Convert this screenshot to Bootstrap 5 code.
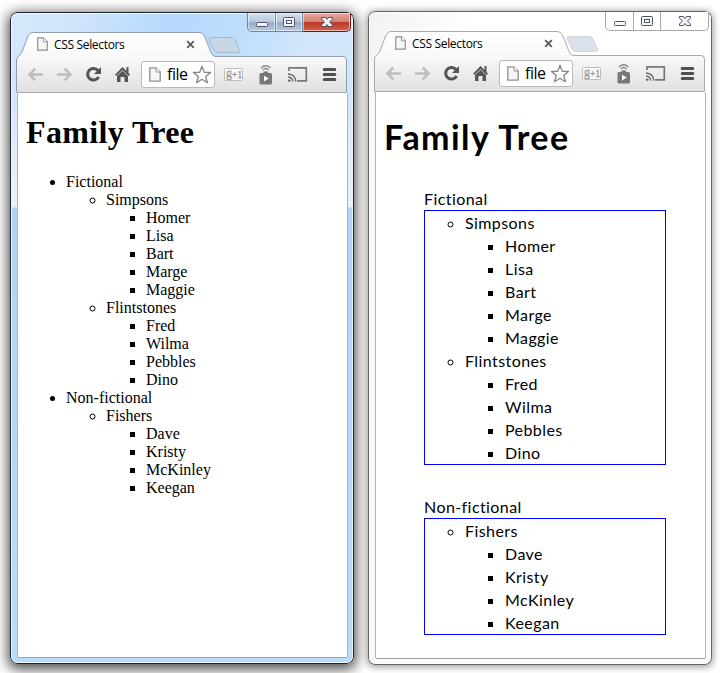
<!DOCTYPE html>
<html lang="en">
<head>
<meta charset="utf-8">
<meta name="viewport" content="width=device-width, initial-scale=1">
<title>CSS Selectors</title>
<link href="https://cdn.jsdelivr.net/npm/bootstrap@5.3.0/dist/css/bootstrap.min.css" rel="stylesheet">
<style>
body{width:720px;height:673px;overflow:hidden;background:#fff;color:#000}
.desk{padding:11px 0 0 10px;gap:14px;height:673px}
.win{width:344px;border-radius:7px;padding:0 7px 7px;flex:none}
.win-active{height:652px;margin-top:1px;
 background:linear-gradient(115deg,#d6e8fb 0,#cfe4fb 20%,#b5d9fd 45%,#bfdefc 65%,#d3e6fb 85%) 0 0/344px 60px no-repeat,linear-gradient(#d0e4fb 0,#cfe3fa 60px,#e8f2fd 195px,#b0d3f7 196px,#bbdbfb 100%);
 box-shadow:inset 0 0 0 1px #20252d,inset 0 0 0 2px #f0f8ff,0 3px 13px 2px rgba(0,0,0,.72)}
.win-idle{height:654px;background:linear-gradient(115deg,#f1f1f1 0,#f9f9f9 15%,#fff 30%) 0 0/344px 90px no-repeat,#fafafa;
 box-shadow:inset 0 0 0 1px #636363,inset 0 0 0 2px #fff,0 1px 7px 1px rgba(0,0,0,.4)}
.caption{height:20px;padding:1px 0 0 230px}
.caption>span{height:19px;flex:none;border:solid #75879c;border-width:0 1px 1px 0;box-shadow:inset 0 0 0 1px rgba(255,255,255,.55);background:linear-gradient(#d3e1f0 0,#b9c9dc 48%,#96acc6 50%,#b5cbe4 100%)}
.caption .c-min{width:29px;border-left-width:1px;border-bottom-left-radius:5px}
.caption .c-max{width:27px}
.caption .c-close{width:48px;border-color:#5c2326;border-bottom-right-radius:5px;background:linear-gradient(#e6a99f 0,#d48073 48%,#bb3627 50%,#d3604a 100%)}
.win-idle .caption>span{background:#fff;border-color:#a8a8a8}
.caption svg,.tools svg,.tabs svg,.omni svg{display:block;flex:none}
.chrome{display:grid;height:61px;margin:0 -7px;width:344px}
.chrome>*{grid-area:1/1}
.edge{fill:none;stroke:#8f9eb1}
.newtab{fill:#c8d7e6;stroke:#a9bacb}
.win-idle .edge{stroke:#aaa}
.win-idle .newtab{fill:#dbe1e9;stroke:#d2d7dd}
.tabs{height:24px;padding:0 0 0 27px;font:12px/24px "Segoe UI","Open Sans",sans-serif;letter-spacing:-.33px}
.tab-title{width:128px;height:23px;margin-left:6px}
.tools{padding:9px 0 0 16px;height:36px}
.omni{width:74px;height:27px;margin:-4px 9px 0 8px;border:1px solid #b9b9b9;border-radius:3px;background:#fff;padding:0 2px 0 7px;font:16px/26px "Segoe UI","Open Sans",sans-serif}
.omni b{font-weight:400;width:25px;height:27px;margin:0 2px 0 6px;letter-spacing:-.5px}
.gap9{gap:9px}.gap12{gap:12px}
.doc{background:#fff;box-shadow:-1px 0 #a9b7c8,1px 0 #b3b3b3,0 1px #a2a2a2;padding:0 8px;margin:0 0 0 1px;width:329px}
.doc ul{padding-left:40px;margin:0}
.doc ul ul{list-style:circle}.doc ul ul ul{list-style:square}
.win-active .doc{height:564px;font:16px/18px "Liberation Serif","Times New Roman",serif}
.win-active h1{font:bold 32px/37px "Liberation Serif","Times New Roman",serif;letter-spacing:.36px;margin:0;padding:21px 0 22px}
.win-idle .doc{height:566px;font:16px/23px "Comic Sans MS",Lato,sans-serif;letter-spacing:.42px}
.win-idle h1{font:bold 34px/45px "Comic Sans MS",Lato,sans-serif;letter-spacing:1.45px;margin:0;padding:22px 0 28px}
.win-idle .tree{list-style:none}
.win-idle .tree>li{width:242px;margin-bottom:30px}
.win-idle .tree>li>ul{border:1px solid #00f}
</style>
<script src="https://cdn.jsdelivr.net/npm/bootstrap@5.3.0/dist/js/bootstrap.bundle.min.js"></script>
</head>
<body>
<svg width="0" height="0" class="position-absolute">
<defs>
<linearGradient id="bar" x1="0" y1="0" x2="0" y2="1"><stop offset="0" stop-color="#fff"/><stop offset=".4" stop-color="#f9f9f9"/><stop offset="1" stop-color="#e0e0e0"/></linearGradient>
<symbol id="shape" viewBox="0 0 344 61">
<path fill="url(#bar)" d="M6.500 60.500V28Q6.500 25 9 24Q11 22.500 12 20L18 4Q19.500.5 23 .5H189Q193 .5 194.500 4L200 18Q202 24.500 206 24.500H333Q336.500 24.500 336.500 28V60.500Z"/>
</symbol>
<symbol id="line" viewBox="0 0 344 61">
<path d="M6.500 60.500V28Q6.500 25 9 24Q11 22.500 12 20L18 4Q19.500.5 23 .5H189Q193 .5 194.500 4L200 18Q202 24.500 206 24.500H333Q336.500 24.500 336.500 28V60.500"/><path stroke="#a8a8a8" d="M7 60.500H336"/>
</symbol>
<symbol id="page" viewBox="0 0 12 15"><path d="M.8.8H7L11.200 5V14.200H.8Z" fill="#f6f6f6" stroke="#8f8f8f" stroke-width="1.300"/><path d="M7 .8V5H11.200" fill="#fff" stroke="#8f8f8f"/></symbol>
<symbol id="back" viewBox="0 0 20 20"><path d="M17 9.500H4M9.300 3.700L3.500 9.500L9.300 15.300" fill="none" stroke="#bdbdbd" stroke-width="2.500"/></symbol>
<symbol id="fwd" viewBox="0 0 20 20"><path d="M2 9.500H15M9.700 3.700L15.500 9.500L9.700 15.300" fill="none" stroke="#bdbdbd" stroke-width="2.500"/></symbol>
<symbol id="reload" viewBox="0 0 20 20"><path d="M14 5.600A5.800 5.800 0 1 0 14.600 12" fill="none" stroke="#555" stroke-width="3"/><path d="M17 2V9H10Z" fill="#555"/></symbol>
<symbol id="home" viewBox="0 0 20 20"><path d="M9.500 2L2 9.700L3.300 11L9.500 4.900L15.700 11L17 9.700L15.500 8V2H13.500V6Z" fill="#555"/><path d="M4 11L9.500 5.800L15 11V17H11.500V12H7.500V17H4Z" fill="#555"/></symbol>
<symbol id="star" viewBox="0 0 20 20"><path d="M10 1.200L12.300 7.300L18.600 7.500L13.700 11.500L15.400 17.700L10 14.200L4.600 17.700L6.300 11.500L1.400 7.500L7.700 7.300Z" fill="#fff" stroke="#858585" stroke-width="1.300" stroke-linejoin="round"/></symbol>
<symbol id="plus" viewBox="0 0 20 20"><rect x=".5" y="3.500" width="18" height="12" rx="1" fill="#fafafa" stroke="#bdbdbd"/><text x="2" y="12.300" font-family="Liberation Serif,serif" font-size="12" fill="#999" stroke="#999" stroke-width=".3">g</text><text x="7.700" y="13" font-family="Liberation Serif,serif" font-size="10" fill="#999" stroke="#999" stroke-width=".3">+1</text></symbol>
<symbol id="remote" viewBox="0 0 20 20"><rect x="3.500" y="8" width="12.500" height="11.500" rx="1.500" fill="#777"/><path d="M7.500 8V6.500H12V8Z" fill="#777"/><path d="M8 10.700V16.500L12.800 13.600Z" fill="#fff"/><path d="M5 3Q9.700-1.500 14.500 3M6.800 5Q9.700 2 12.700 5" fill="none" stroke="#888" stroke-width="1.300"/></symbol>
<symbol id="cast" viewBox="0 0 20 20"><path d="M1 6V2.800H18.300V15.800H9" fill="none" stroke="#777" stroke-width="1.700"/><path d="M0 9Q7.300 9.300 7.700 16.500M0 12Q4.500 12.200 4.700 16.500" fill="none" stroke="#666" stroke-width="1.300"/><circle cx="1.300" cy="15.600" r="1.200" fill="#555"/></symbol>
<symbol id="menu" viewBox="0 0 20 20"><path d="M4.200 4.500H14.800M4.200 9.500H14.800M4.200 14.500H14.800" stroke="#505050" stroke-width="3" stroke-linecap="round"/></symbol>
<symbol id="tabx" viewBox="0 0 9 9"><path d="M1.200 1.200L7.800 7.800M7.800 1.200L1.200 7.800" stroke="#5a5a5a" stroke-width="1.800"/></symbol>
<symbol id="wmin" viewBox="0 0 14 12"><rect x="1.500" y="6.500" width="11" height="4" rx="1" fill="#f6f6f6" stroke="#4d5265"/></symbol>
<symbol id="wmax" viewBox="0 0 14 12"><rect x="1.500" y="1.500" width="11" height="9" rx="1" fill="#f4f4f4" stroke="#4d5265"/><rect x="4.500" y="4.500" width="5" height="3" fill="#fff" stroke="#4d5265"/></symbol>
<symbol id="wclose" viewBox="0 0 14 12"><path d="M1.500 1.500H5.500L7 3.500L8.500 1.500H12.500V3L9.500 6L12.500 9V10.500H8.500L7 8.500L5.500 10.500H1.500V9L4.500 6L1.500 3Z" fill="#f6f6f6" stroke="#4d5265" stroke-linejoin="round"/></symbol>
</defs>
</svg>

<main class="desk d-flex align-items-start">
<section class="win win-active">
<div class="caption d-flex">
<span class="c-min d-flex align-items-center justify-content-center"><svg width="14" height="12"><use href="#wmin"/></svg></span>
<span class="c-max d-flex align-items-center justify-content-center"><svg width="14" height="12"><use href="#wmax"/></svg></span>
<span class="c-close d-flex align-items-center justify-content-center"><svg width="14" height="12"><use href="#wclose"/></svg></span>
</div>
<div class="chrome">
<svg width="344" height="61"><path class="newtab" d="M201 5.500H221Q224 5.500 225 8L229.500 18Q230.500 20.500 228 20.500H208Q205 20.500 204 18L199 8Q198 5.500 201 5.500Z"/><use href="#shape"/><use href="#line" class="edge"/></svg>
<div>
<div class="tabs d-flex align-items-center"><svg width="11" height="14"><use href="#page"/></svg><span class="tab-title">CSS Selectors</span><svg class="ms-1" width="9" height="9"><use href="#tabx"/></svg></div>
<div class="tools d-flex">
<div class="d-flex gap9"><svg width="20" height="20"><use href="#back"/></svg><svg width="20" height="20"><use href="#fwd"/></svg><svg width="20" height="20"><use href="#reload"/></svg><svg width="20" height="20"><use href="#home"/></svg></div>
<div class="omni d-flex align-items-center"><svg width="12" height="15"><use href="#page"/></svg><b>file</b><svg width="20" height="20"><use href="#star"/></svg></div>
<div class="d-flex gap12"><svg width="20" height="20"><use href="#plus"/></svg><svg width="20" height="20"><use href="#remote"/></svg><svg width="20" height="20"><use href="#cast"/></svg><svg width="20" height="20"><use href="#menu"/></svg></div>
</div>
</div>
</div>
<div class="doc">
<h1>Family Tree</h1>
<ul class="tree">
<li>Fictional<ul>
<li>Simpsons<ul><li>Homer</li><li>Lisa</li><li>Bart</li><li>Marge</li><li>Maggie</li></ul></li>
<li>Flintstones<ul><li>Fred</li><li>Wilma</li><li>Pebbles</li><li>Dino</li></ul></li>
</ul></li>
<li>Non-fictional<ul>
<li>Fishers<ul><li>Dave</li><li>Kristy</li><li>McKinley</li><li>Keegan</li></ul></li>
</ul></li>
</ul>
</div>
</section>

<section class="win win-idle">
<div class="caption d-flex">
<span class="c-min d-flex align-items-center justify-content-center"><svg width="14" height="12"><use href="#wmin"/></svg></span>
<span class="c-max d-flex align-items-center justify-content-center"><svg width="14" height="12"><use href="#wmax"/></svg></span>
<span class="c-close d-flex align-items-center justify-content-center"><svg width="14" height="12"><use href="#wclose"/></svg></span>
</div>
<div class="chrome">
<svg width="344" height="61"><path class="newtab" d="M201 5.500H221Q224 5.500 225 8L229.500 18Q230.500 20.500 228 20.500H208Q205 20.500 204 18L199 8Q198 5.500 201 5.500Z"/><use href="#shape"/><use href="#line" class="edge"/></svg>
<div>
<div class="tabs d-flex align-items-center"><svg width="11" height="14"><use href="#page"/></svg><span class="tab-title">CSS Selectors</span><svg class="ms-1" width="9" height="9"><use href="#tabx"/></svg></div>
<div class="tools d-flex">
<div class="d-flex gap9"><svg width="20" height="20"><use href="#back"/></svg><svg width="20" height="20"><use href="#fwd"/></svg><svg width="20" height="20"><use href="#reload"/></svg><svg width="20" height="20"><use href="#home"/></svg></div>
<div class="omni d-flex align-items-center"><svg width="12" height="15"><use href="#page"/></svg><b>file</b><svg width="20" height="20"><use href="#star"/></svg></div>
<div class="d-flex gap12"><svg width="20" height="20"><use href="#plus"/></svg><svg width="20" height="20"><use href="#remote"/></svg><svg width="20" height="20"><use href="#cast"/></svg><svg width="20" height="20"><use href="#menu"/></svg></div>
</div>
</div>
</div>
<div class="doc">
<h1>Family Tree</h1>
<ul class="tree">
<li>Fictional<ul>
<li>Simpsons<ul><li>Homer</li><li>Lisa</li><li>Bart</li><li>Marge</li><li>Maggie</li></ul></li>
<li>Flintstones<ul><li>Fred</li><li>Wilma</li><li>Pebbles</li><li>Dino</li></ul></li>
</ul></li>
<li>Non-fictional<ul>
<li>Fishers<ul><li>Dave</li><li>Kristy</li><li>McKinley</li><li>Keegan</li></ul></li>
</ul></li>
</ul>
</div>
</section>
</main>
</body>
</html>
